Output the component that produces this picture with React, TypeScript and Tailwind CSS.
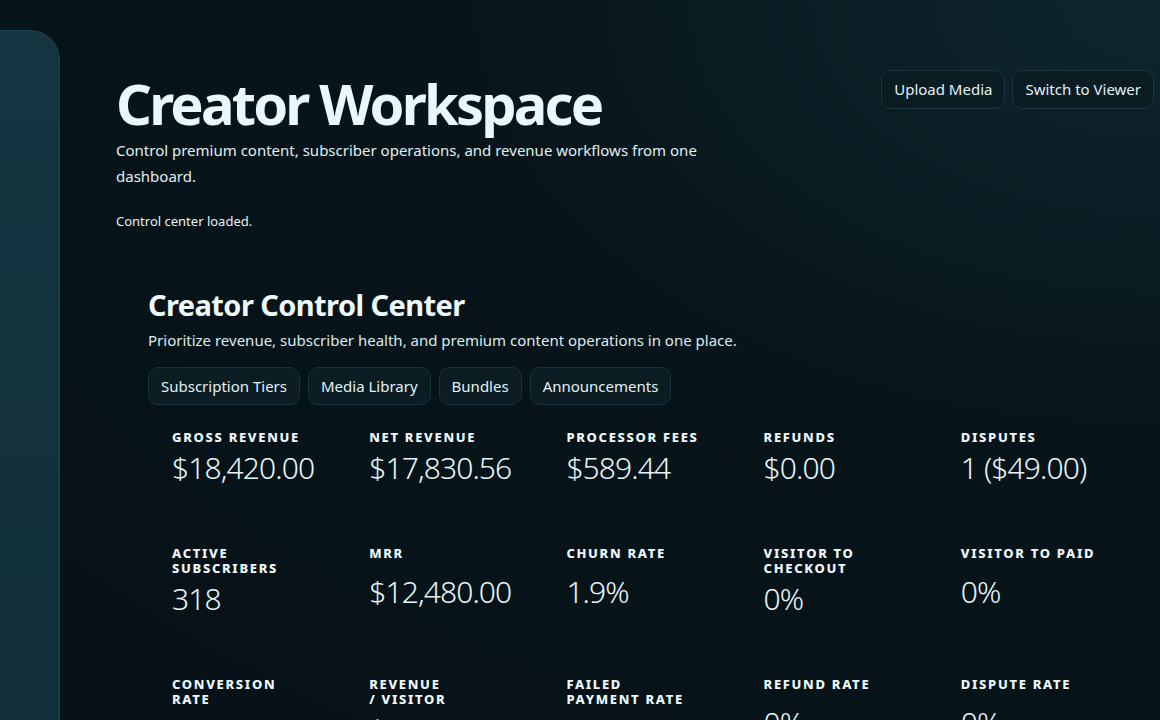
import { ReactNode } from "react";

interface Metric {
    label: ReactNode
    value: string
}

const METRICS: Metric[] = [
    { label: "Gross Revenue", value: "$18,420.00" },
    { label: "Net Revenue", value: "$17,830.56" },
    { label: "Processor Fees", value: "$589.44" },
    { label: "Refunds", value: "$0.00" },
    { label: "Disputes", value: "1 ($49.00)" },
    { label: <>Active<br />Subscribers</>, value: "318" },
    { label: "MRR", value: "$12,480.00" },
    { label: "Churn Rate", value: "1.9%" },
    { label: <>Visitor to<br />Checkout</>, value: "0%" },
    { label: "Visitor to Paid", value: "0%" },
    { label: <>Conversion<br />Rate</>, value: "0%" },
    { label: <>Revenue<br />/ Visitor</>, value: "$0.00" },
    { label: <>Failed<br />Payment Rate</>, value: "0%" },
    { label: "Refund Rate", value: "0%" },
    { label: "Dispute Rate", value: "0%" },
];

const TABS = ["Subscription Tiers", "Media Library", "Bundles", "Announcements"];

const MetricCard = (p: Metric) => {
    return (
        <div className="flex flex-col p-6">
            <div className="text-[13px] leading-[15px] font-extrabold uppercase tracking-[0.13em] text-[#eef8fb]">
                {p.label}
            </div>
            <div className="flex flex-1 items-center mt-1">
                <div className="text-[30px] leading-[37px] font-light tracking-[-0.03em] text-[#e8f5f9]">
                    {p.value}
                </div>
            </div>
        </div>
    )
}

const App = () => {
    return (
        <div className="flex h-[720px] overflow-hidden text-[#dcecf1] bg-[radial-gradient(ellipse_at_top_right,#0e262e_0%,#071419_45%,#061217_100%)]"
            style={{ fontFamily: '"Noto Sans", "Open Sans", sans-serif' }}>
            <div className="pt-[30px] shrink-0">
                <div className="w-[60px] h-full rounded-tr-[30px] border-t border-r border-[#1d4350] bg-gradient-to-b from-[#143441] to-[#11303b]"></div>
            </div>
            <main className="flex-1 pl-[56px] pr-[6px] pt-[70px]">
                <div className="flex flex-row justify-between items-start">
                    <div>
                        <h1 className="text-[56px] leading-[60px] font-bold tracking-[-0.05em] text-[#e8f8fc] mt-[3px]">
                            Creator Workspace
                        </h1>
                        <p className="mt-[4px] max-w-[620px] text-[15px] leading-[26px] text-[#e0eef2]">
                            Control premium content, subscriber operations, and revenue workflows from one dashboard.
                        </p>
                        <p className="mt-[22px] text-[13px] leading-[20px] text-[#e6f2f5]">
                            Control center loaded.
                        </p>
                    </div>
                    <div className="flex flex-row gap-[7px]">
                        <button className="h-[39px] px-3 rounded-[10px] border border-[#1c3540] bg-[#0b1c23] text-[15px] text-[#e2f0f4]">
                            Upload Media
                        </button>
                        <button className="h-[39px] px-3 rounded-[10px] border border-[#1c3540] bg-[#0b1c23] text-[15px] text-[#e2f0f4]">
                            Switch to Viewer
                        </button>
                    </div>
                </div>
                <section className="mt-[56px] px-8">
                    <h2 className="text-[29px] leading-[36px] font-bold tracking-[-0.02em] text-[#f0fafc]">
                        Creator Control Center
                    </h2>
                    <p className="mt-[6px] text-[15px] leading-[22px] text-[#dcecf1]">
                        Prioritize revenue, subscriber health, and premium content operations in one place.
                    </p>
                    <div className="flex flex-row gap-2 mt-[16px]">
                        {TABS.map((t) => (
                            <button key={t} className="h-[38px] px-3 rounded-[10px] border border-[#1a313b] bg-[#0c1c23] text-[15px] text-[#e2f0f4]">
                                {t}
                            </button>
                        ))}
                    </div>
                    <div className="grid grid-cols-5 gap-3 mt-[1px]">
                        {METRICS.map((m, i) => (
                            <MetricCard key={i} label={m.label} value={m.value} />
                        ))}
                    </div>
                </section>
            </main>
        </div>
    )
}

export default App;
